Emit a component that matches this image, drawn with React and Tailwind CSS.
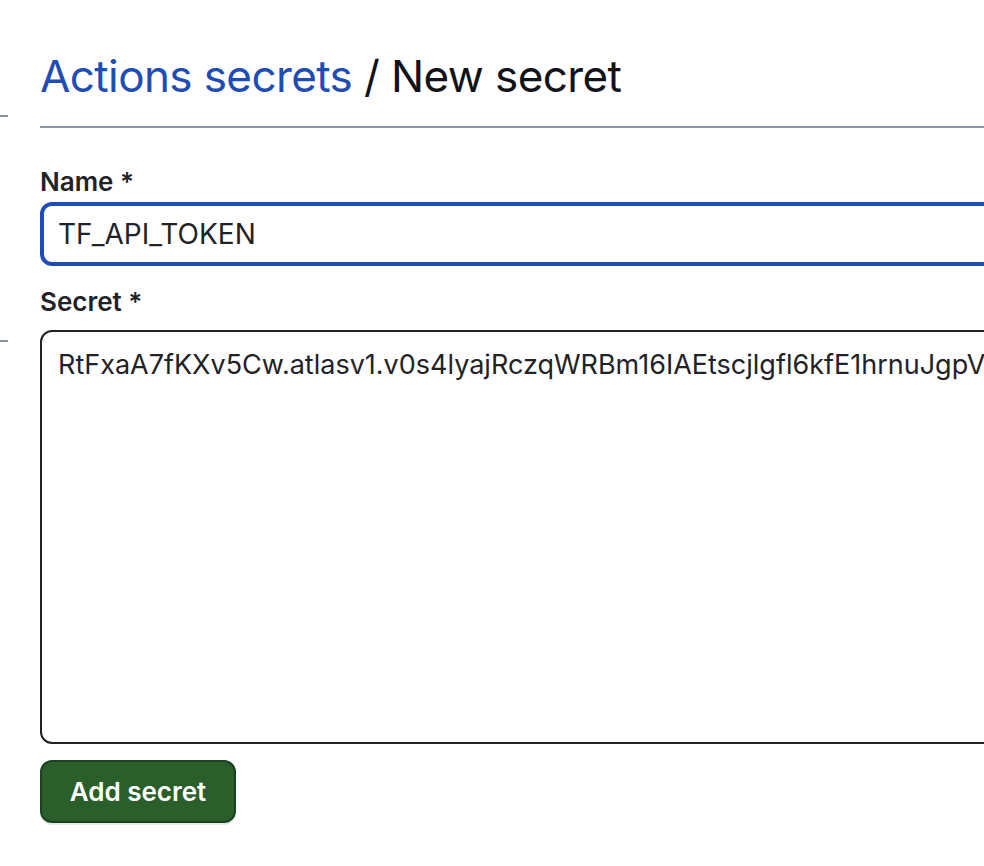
import React from "react";

const SECRET =
  "RtFxaA7fKXv5Cw.atlasv1.v0s4lyajRczqWRBm16IAEtscjlgfl6kfE1hrnuJgpVz9xkLq3TnYb8oPdR2mVcHsG";

export default function App() {
  return (
    <div
      className="flex w-[984px] h-[866px] overflow-hidden bg-white text-[#1f2328]"
      style={{ fontFamily: "Inter, 'Noto Sans', sans-serif" }}
    >
      {/* sidebar edge */}
      <div className="w-2 shrink-0 flex flex-col">
        <div className="mt-[115px] h-[2px] bg-[#8c959f]" />
        <div className="mt-[223px] h-[2px] bg-[#8c959f]" />
      </div>

      <div className="ml-8 w-[1100px] shrink-0 pt-[46px]">
        <div className="pb-[20px] border-b-2 border-[#8c959f]">
          <h1 className="text-[44px] leading-[60px] font-normal tracking-[-0.6px]">
            <span className="text-[#1f4db3]">Actions secrets</span>
            <span className="text-[#111318]"> / New secret</span>
          </h1>
        </div>

        <form className="pt-[38px]">
          <label className="block text-[26px] leading-[32px] font-semibold mb-[4px]">
            Name *
          </label>
          <input
            readOnly
            value="TF_API_TOKEN"
            className="block w-full h-[64px] rounded-[12px] border-[4px] border-[#1f4db3] px-[14px] text-[28px] outline-none"
          />

          <label className="block text-[26px] leading-[32px] font-semibold mt-[20px] mb-[12px]">
            Secret *
          </label>
          <div className="h-[414px] rounded-[12px] border-2 border-[#1f2328] pl-[16px] pt-[16px] text-[27px] leading-[34px] whitespace-nowrap overflow-hidden">
            {SECRET}
          </div>

          <button
            type="button"
            className="mt-[16px] h-[63px] w-[196px] rounded-[12px] border-2 border-[#1a4220] bg-[#2a5e2b] text-white text-[26px] font-semibold shadow-[0_2px_0_rgba(31,35,40,0.1)]"
          >
            Add secret
          </button>
        </form>
      </div>
    </div>
  );
}
